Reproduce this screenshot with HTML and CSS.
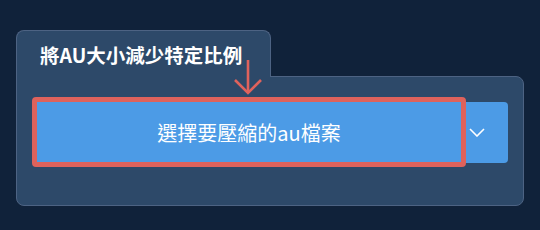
FILE: index.html
```html
<!DOCTYPE html>
<html lang="zh-Hant">
<head>
    <meta charset="UTF-8">
    <title>將AU大小減少特定比例</title>
    <link rel="stylesheet" href="styles.css">
</head>
<body>
    <div class="card">
        <div class="tab">
            <h2 class="tab-title">將AU大小減少特定比例</h2>
        </div>
        <div class="panel">
            <div class="picker">
                <button class="picker-main">選擇要壓縮的au檔案</button>
                <button class="picker-toggle" aria-label="more">
                    <svg width="16" height="9" viewBox="0 0 16 9">
                        <polyline points="1,1 8,8 15,1" fill="none" stroke="#fff" stroke-width="1.6"/>
                    </svg>
                </button>
            </div>
        </div>
        <!-- hint arrow pointing at the button -->
        <svg class="hint-arrow" width="30" height="36" viewBox="0 0 30 36">
            <line x1="15" y1="0" x2="15" y2="33" stroke="#df625c" stroke-width="2.6"/>
            <polyline points="2,20 15,33 28,20" fill="none" stroke="#df625c" stroke-width="2.6"/>
        </svg>
    </div>
</body>
</html>
```

FILE: styles.css
```css
body {
    margin: 0;
    background-color: #10223a;
    font-family: "Noto Sans CJK TC", "Noto Sans", sans-serif;
}
.card {
    position: relative;
    width: 508px;
    margin: 30px 0 0 16px;
}
.tab {
    position: relative;
    z-index: 1;
    width: 253px;
    height: 46px;
    margin-bottom: -1px;
    background-color: #2d4969;
    border: 1px solid #4d6383;
    border-bottom: none;
    border-radius: 8px 8px 0 0;
}
.tab-title {
    margin: 0;
    padding: 11px 0 0 23px;
    color: #fff;
    font-size: 19.5px;
    font-weight: bold;
    line-height: 26px;
}
.panel {
    height: 90px;
    padding: 20px 15px 18px;
    background-color: #2d4969;
    border: 1px solid #4d6383;
    border-radius: 0 8px 8px 8px;
}
.picker {
    display: flex;
    align-items: center;
}
.picker-main {
    width: 434px;
    height: 70px;
    background-color: #4c9be6;
    border: 5px solid #de625c;
    border-radius: 4px;
    color: #fff;
    font-family: inherit;
    font-size: 20px;
    cursor: pointer;
}
.picker-toggle {
    display: flex;
    align-items: center;
    width: 42px;
    height: 61px;
    padding: 0 0 0 3px;
    background-color: #4c9be6;
    border: none;
    border-radius: 0 4px 4px 0;
    cursor: pointer;
}
.hint-arrow {
    position: absolute;
    z-index: 2;
    left: 217px;
    top: 30px;
}
```
